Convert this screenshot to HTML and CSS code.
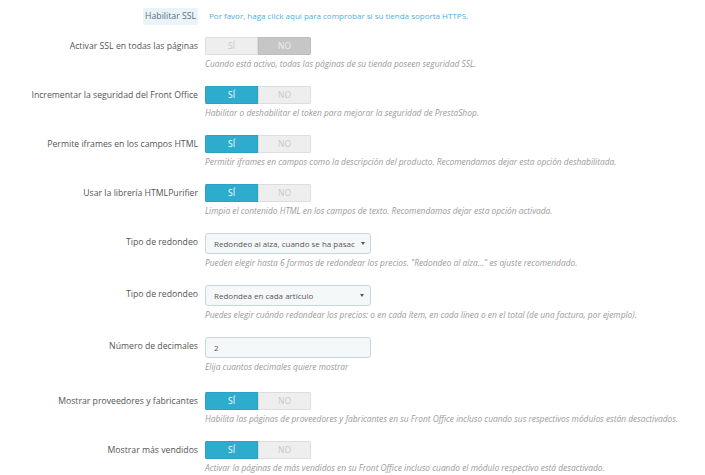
FILE: index.html
```html
<!DOCTYPE html>
<html lang="es">
<head>
    <meta charset="UTF-8">
    <title>Preferencias generales</title>
    <link rel="stylesheet" href="styles.css">
</head>
<body>

<form class="form">
    <div class="row row-ssl">
        <label class="label"><span class="ssl-btn">Habilitar SSL</span></label>
        <div class="control">
            <a class="link" href="#">Por favor, haga click aquí para comprobar si su tienda soporta HTTPS.</a>
        </div>
    </div>

    <div class="row">
        <label class="label">Activar SSL en todas las páginas</label>
        <div class="control">
            <div class="switch off">
                <span class="yes">SÍ</span><span class="no">NO</span>
            </div>
            <p class="help">Cuando está activo, todas las páginas de su tienda poseen seguridad SSL.</p>
        </div>
    </div>

    <div class="row">
        <label class="label">Incrementar la seguridad del Front Office</label>
        <div class="control">
            <div class="switch on">
                <span class="yes">SÍ</span><span class="no">NO</span>
            </div>
            <p class="help">Habilitar o deshabilitar el token para mejorar la seguridad de PrestaShop.</p>
        </div>
    </div>

    <div class="row">
        <label class="label">Permite iframes en los campos HTML</label>
        <div class="control">
            <div class="switch on">
                <span class="yes">SÍ</span><span class="no">NO</span>
            </div>
            <p class="help">Permitir iframes en campos como la descripción del producto. Recomendamos dejar esta opción deshabilitada.</p>
        </div>
    </div>

    <div class="row">
        <label class="label">Usar la librería HTMLPurifier</label>
        <div class="control">
            <div class="switch on">
                <span class="yes">SÍ</span><span class="no">NO</span>
            </div>
            <p class="help">Limpia el contenido HTML en los campos de texto. Recomendamos dejar esta opción activada.</p>
        </div>
    </div>

    <div class="row">
        <label class="label">Tipo de redondeo</label>
        <div class="control">
            <div class="select">
                <span class="select-text">Redondeo al alza, cuando se ha pasac</span>
                <span class="caret"></span>
            </div>
            <p class="help">Pueden elegir hasta 6 formas de redondear los precios. "Redondeo al alza..." es ajuste recomendado.</p>
        </div>
    </div>

    <div class="row">
        <label class="label">Tipo de redondeo</label>
        <div class="control">
            <div class="select">
                <span class="select-text">Redondea en cada artículo</span>
                <span class="caret"></span>
            </div>
            <p class="help">Puedes elegir cuándo redondear los precios: o en cada ítem, en cada línea o en el total (de una factura, por ejemplo).</p>
        </div>
    </div>

    <div class="row row-input">
        <label class="label">Número de decimales</label>
        <div class="control">
            <div class="input">2</div>
            <p class="help">Elija cuantos decimales quiere mostrar</p>
        </div>
    </div>

    <div class="row">
        <label class="label">Mostrar proveedores y fabricantes</label>
        <div class="control">
            <div class="switch on">
                <span class="yes">SÍ</span><span class="no">NO</span>
            </div>
            <p class="help">Habilita las páginas de proveedores y fabricantes en su Front Office incluso cuando sus respectivos módulos están desactivados.</p>
        </div>
    </div>

    <div class="row">
        <label class="label">Mostrar más vendidos</label>
        <div class="control">
            <div class="switch on">
                <span class="yes">SÍ</span><span class="no">NO</span>
            </div>
            <p class="help">Activar la páginas de más vendidos en su Front Office incluso cuando el módulo respectivo está desactivado.</p>
        </div>
    </div>
</form>

</body>
</html>
```

FILE: styles.css
```css
body {
    margin: 0;
    padding: 0;
    background: #fff;
    font-family: 'Open Sans', 'Noto Sans', sans-serif;
    color: #555;
}

/* Formulario */
.form {
    padding-top: 7px;
}

.row {
    display: grid;
    grid-template-columns: 198px 1fr;
    column-gap: 7px;
    margin-bottom: 15px;
}

.row-input {
    margin-bottom: 18px;
}

.control {
    font-size: 8px;
    line-height: 14px;
}

.row-ssl {
    margin-bottom: 12px;
    align-items: center;
}

.row-ssl .control {
    line-height: 18px;
}

.label {
    text-align: right;
    font-size: 8.7px;
    line-height: 18px;
    color: #555;
}

.ssl-btn {
    display: inline-block;
    background: #e9f4fa;
    color: #5c6b7a;
    padding: 0 2px;
    line-height: 17px;
    border-radius: 2px;
}

.link {
    color: #4bb0e6;
    text-decoration: none;
    font-size: 8px;
    margin-left: 4px;
}

/* Interruptor SI / NO */
.switch {
    display: flex;
    width: 106px;
    height: 18px;
    border-radius: 2px;
    overflow: hidden;
    font-size: 8.5px;
    text-align: center;
}

.switch span {
    flex: 1;
    box-sizing: border-box;
}

.switch .yes,
.switch .no {
    background: #eee;
    color: #c7c7c7;
    border: 1px solid #ddd;
    line-height: 16px;
}

.switch.on .yes {
    background: #2eacce;
    border-color: #2aa3c3;
    color: #fff;
}

.switch.off .no {
    background: #c6c6c6;
    border-color: #bdbdbd;
    color: #eee;
}

/* Select y campo de texto */
.select,
.input {
    box-sizing: border-box;
    width: 166px;
    height: 21px;
    background: #f5f8f9;
    border: 1px solid #c7d6db;
    border-radius: 3px;
    font-size: 8px;
    line-height: 19px;
    padding: 0 6px 0 8px;
    color: #555;
}

.select {
    display: flex;
    justify-content: space-between;
    align-items: center;
}

.select-text {
    white-space: nowrap;
}

.caret {
    flex: none;
    width: 0;
    height: 0;
    border-left: 2px solid transparent;
    border-right: 2px solid transparent;
    border-top: 3px solid #555;
    margin-left: 6px;
}

.help {
    margin: 2px 0 0;
    font-size: 8.4px;
    line-height: 14px;
    font-style: italic;
    color: #9a9a9a;
    white-space: nowrap;
}
```
